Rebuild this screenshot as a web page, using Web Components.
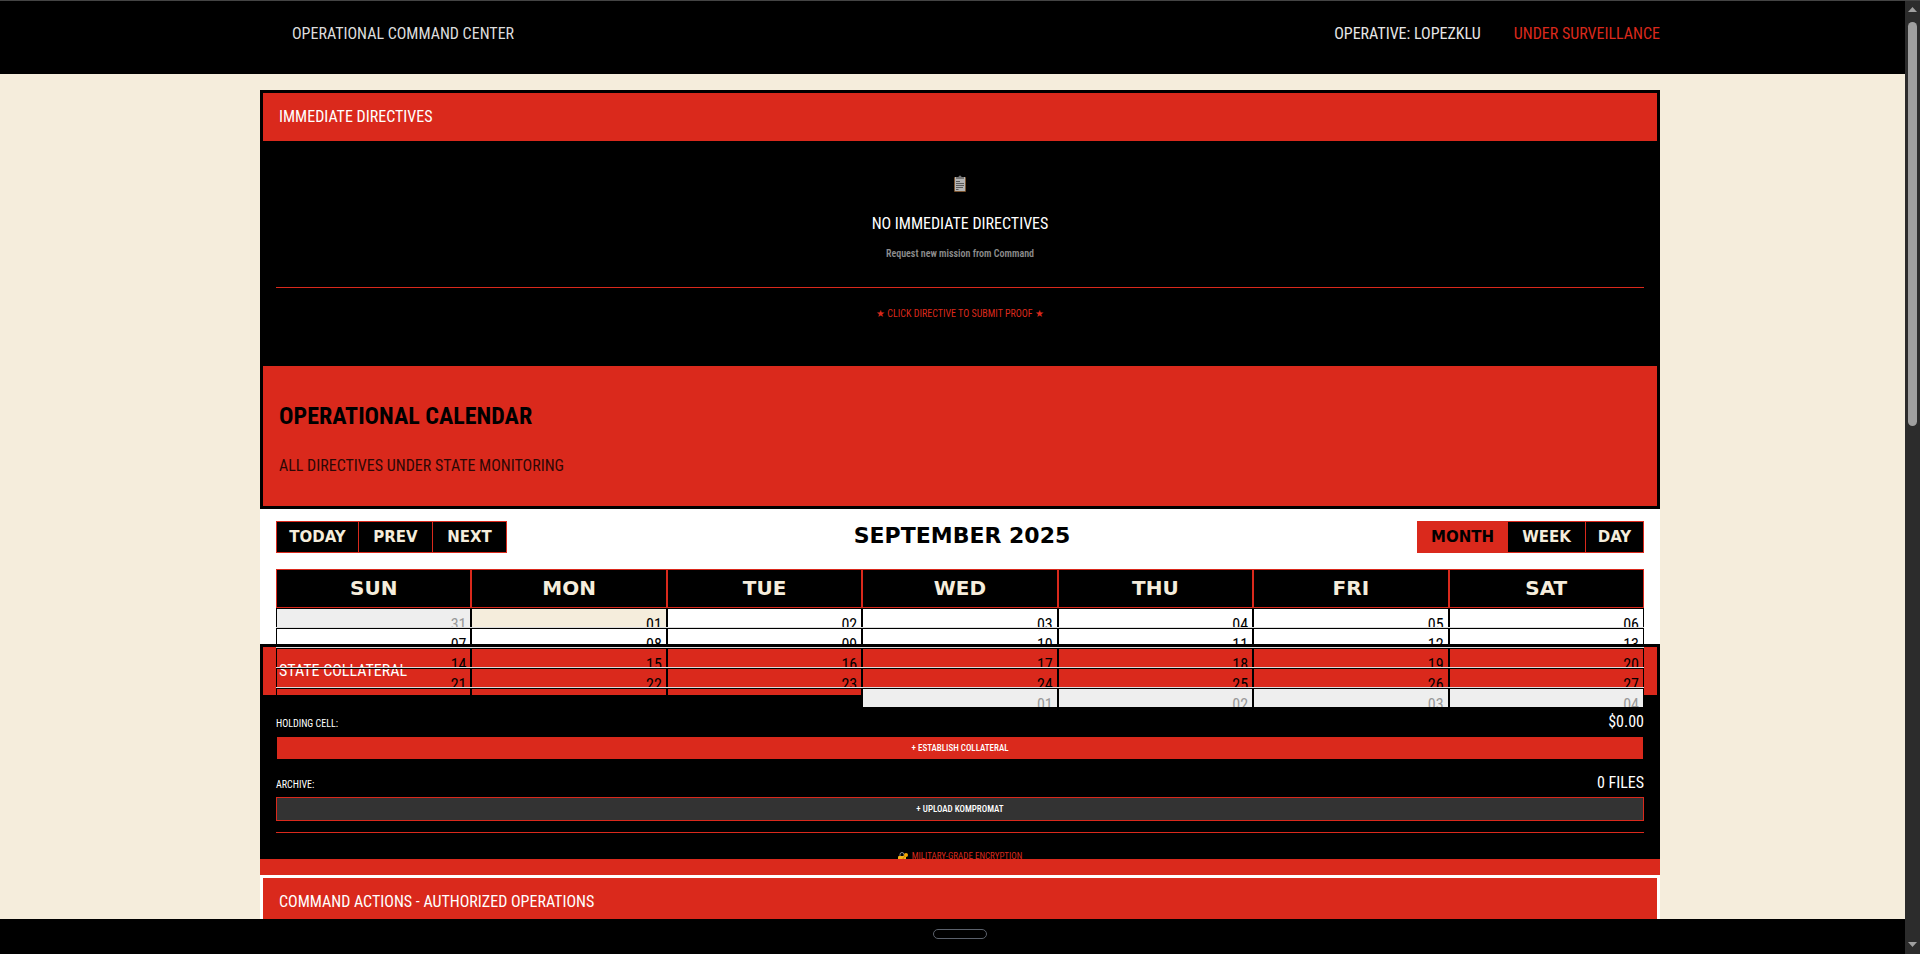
<!DOCTYPE html>
<html lang="en">
<head>
<meta charset="utf-8">
<title>Operational Command Center</title>
<style>
  :root {
    --red: #da291c;
    --cream: #f5eddc;
    --page-width: 1400px;
    --display: "DejaVu Sans", sans-serif;
  }
  html, body { height: 100%; }
  body {
    margin: 0;
    background: var(--cream);
    font: 16px/24px "Roboto Condensed", Roboto, sans-serif;
    color: #fff;
  }
</style>
</head>
<body>
<command-app></command-app>

<script>
const define = (name, html, setup) => {
  const template = document.createElement('template');
  template.innerHTML = html;
  customElements.define(name, class extends HTMLElement {
    constructor() {
      super();
      this.attachShadow({ mode: 'open' }).append(template.content.cloneNode(true));
    }
    connectedCallback() { if (setup) setup(this, this.shadowRoot); }
  });
};

define('command-header', `
  <style>
    :host { display: block; background: #000; border-top: 1px solid #444; }
    nav { display: flex; gap: 33px; max-width: var(--page-width); margin: 0 auto; padding: 21px 0 28px 32px; box-sizing: border-box; }
    .brand { flex: 1; color: #ddd; }
    .user { color: #e6e6e6; }
    .status { color: var(--red); }
  </style>
  <nav>
    <span class="brand">OPERATIONAL COMMAND CENTER</span>
    <span class="user">OPERATIVE: LOPEZKLU</span>
    <span class="status">UNDER SURVEILLANCE</span>
  </nav>`);

define('command-panel', `
  <style>
    :host { display: block; background: #000; border: 3px solid #000; border-bottom: 0; overflow: hidden; }
    :host([tone="light"]) { border-color: #fff; }
    header { background: var(--red); padding: 12px 16px; }
  </style>
  <header><slot name="title"></slot></header>
  <slot></slot>`);

define('directive-list', `
  <style>
    :host { display: block; padding: 32px 13px 42px; text-align: center; }
    svg { display: block; margin: 0 auto 19px; opacity: .75; }
    p { margin: 0; }
    .hint, .note { font-size: 10px; line-height: 15px; }
    .hint { margin: 10px 0 26px; color: #8c8c8c; font-weight: 600; }
    .note { padding-top: 18px; border-top: 1px solid var(--red); color: var(--red); }
  </style>
  <svg width="16" height="20" viewBox="0 0 16 20" aria-hidden="true">
    <rect x="2" y="4" width="12" height="15" rx="1" fill="#a4703f"/>
    <rect x="3" y="4" width="10" height="14" fill="#f0f0f0"/>
    <path d="M4 6V4h2.500a1.500 1.500 0 0 1 3 0H12v2z" fill="#9a9a9a"/>
    <path d="M4 8.500h4M4 10.500h8M4 12.500h8M4 14.500h7M4 16.500h2.500" stroke="#777" fill="none"/>
  </svg>
  <p>NO IMMEDIATE DIRECTIVES</p>
  <p class="hint">Request new mission from Command</p>
  <p class="note">★ CLICK DIRECTIVE TO SUBMIT PROOF ★</p>`);

define('calendar-banner', `
  <style>
    :host { display: block; background: var(--red); border: 3px solid #000; padding: 34px 16px 28px; color: #000; }
    h2 { margin: 0 0 22px; font-size: 24px; line-height: 32px; }
    p { margin: 0; opacity: .8; }
  </style>
  <h2>OPERATIONAL CALENDAR</h2>
  <p>ALL DIRECTIVES UNDER STATE MONITORING</p>`);

define('button-group', `
  <style>
    :host { display: flex; border: 1px solid var(--red); background: #000; box-sizing: border-box; height: 32px; }
    ::slotted(button) {
      border: 0; border-left: 1px solid var(--red); padding: 0;
      background: #000; color: var(--cream);
      font: bold 15px/20px var(--display); cursor: pointer;
    }
    ::slotted(button:first-child) { border-left: 0; }
    ::slotted(button[aria-pressed="true"]) { background: var(--red); color: #000; }
  </style>
  <slot></slot>`);

define('month-calendar', `
  <style>
    :host { display: block; position: relative; z-index: 1; background: #fff; padding: 12px 16px 0; color: #000; }
    .toolbar { display: flex; align-items: center; margin-bottom: 16px; }
    .label { flex: 1; text-align: center; padding-bottom: 2px; font: bold 22px/24px var(--display); }
    .month-view { width: 89px; } .week-view { width: 78px; } .day-view { width: 58px; }
    .today-step { width: 81px; } .step { width: 74px; }
    /* the month grid keeps spilling below its collapsed box */
    .month { height: 75px; overflow: visible; }
    table { width: 100%; table-layout: fixed; border-collapse: separate; border-spacing: 0; }
    th { box-sizing: border-box; height: 39px; padding: 0 0 2px; border: 1px solid var(--red); background: #000; color: var(--cream); font: bold 20px/24px var(--display); }
    td { padding: 0; border-top: 1px solid #ddd; }
    tbody tr:first-child td { border-top: 0; }
    td div { box-sizing: border-box; height: 19px; overflow: hidden; border: 1px solid #000; border-bottom: 0; padding: 4px 4px 0 0; text-align: right; }
    td.off div { background: #eee; color: #999; }
    td.today div { background: var(--cream); }
  </style>
  <div class="toolbar">
    <button-group><button class="today-step">TODAY</button><button class="step">PREV</button><button class="step">NEXT</button></button-group>
    <span class="label">SEPTEMBER 2025</span>
    <button-group><button class="month-view" aria-pressed="true">MONTH</button><button class="week-view">WEEK</button><button class="day-view">DAY</button></button-group>
  </div>
  <div class="month">
    <table><thead><tr></tr></thead><tbody></tbody></table>
  </div>`, (host, root) => {
  const head = root.querySelector('thead tr');
  const body = root.querySelector('tbody');
  if (head.children.length) return;
  for (const day of ['SUN', 'MON', 'TUE', 'WED', 'THU', 'FRI', 'SAT']) {
    const th = document.createElement('th');
    th.scope = 'col';
    th.textContent = day;
    head.append(th);
  }
  for (let week = 0; week < 5; week++) {
    const row = body.insertRow();
    for (let d = 0; d < 7; d++) {
      const date = new Date(2025, 7, 31 + week * 7 + d);
      const cell = row.insertCell();
      const box = document.createElement('div');
      box.textContent = String(date.getDate()).padStart(2, '0');
      if (date.getMonth() !== 8) cell.className = 'off';
      else if (date.getDate() === 1) cell.className = 'today';
      cell.append(box);
    }
  }
});

define('collateral-ledger', `
  <style>
    :host { display: block; height: 164px; box-sizing: border-box; padding: 15px 13px 0; }
    .row { display: flex; justify-content: space-between; align-items: baseline; margin-bottom: 2px; }
    .row span { font-size: 10px; line-height: 15px; }
    button, .note { font-size: 9px; line-height: 15px; }
    button { display: block; box-sizing: border-box; width: 100%; height: 24px; padding: 0; margin: 0 0 11px; border: 1px solid #000; background: var(--red); color: #fff; font-family: inherit; font-weight: 500; cursor: pointer; }
    button.dark { background: #333; border-color: var(--red); margin-bottom: 11px; }
    .note { display: flex; justify-content: center; gap: 4px; margin: 0; padding-top: 16px; border-top: 1px solid var(--red); color: var(--red); }
  </style>
  <div class="row"><span>HOLDING CELL:</span><output>$0.00</output></div>
  <button>+ ESTABLISH COLLATERAL</button>
  <div class="row"><span>ARCHIVE:</span><output>0 FILES</output></div>
  <button class="dark">+ UPLOAD KOMPROMAT</button>
  <p class="note">
    <svg width="10" height="15" viewBox="0 0 10 15" aria-hidden="true">
      <path d="M2 8V5.500a2 2 0 0 1 4 0V8" fill="none" stroke="#8d9299"/>
      <rect x="0" y="7" width="8" height="6" rx="1" fill="#f5b21a"/>
      <circle cx="8" cy="6" r="2" fill="#f5a800"/>
      <path d="M7 7l-3 4" stroke="#c98500"/>
    </svg>
    <span>MILITARY-GRADE ENCRYPTION</span>
  </p>`);

define('command-footer', `
  <style>
    :host { display: flex; justify-content: center; background: #000; padding: 10px 0 15px; }
    button { box-sizing: border-box; width: 54px; height: 10px; padding: 0; border: 1px solid #5b616b; border-radius: 5px; background: transparent; }
  </style>
  <button aria-label="Expand"></button>`);

define('scroll-rail', `
  <style>
    :host { position: fixed; z-index: 5; top: 1px; right: 0; bottom: 0; width: 15px; display: flex; flex-direction: column; align-items: center; box-sizing: border-box; padding: 6px 0 7px; background: #2c2c2c; }
    svg { display: block; fill: #9f9f9f; }
    .thumb { width: 9px; flex: 0 0 43%; margin-top: 10px; border-radius: 5px; background: #9f9f9f; }
    .space { flex: 1; }
  </style>
  <svg width="9" height="5" viewBox="0 0 9 5"><path d="M4.500 0 9 5H0z"/></svg>
  <div class="thumb"></div>
  <div class="space"></div>
  <svg width="9" height="5" viewBox="0 0 9 5"><path d="M0 0h9L4.500 5z"/></svg>`);

define('command-app', `
  <style>
    :host { display: flex; flex-direction: column; height: 100vh; overflow: hidden; }
    main { flex: 1; min-height: 0; overflow: hidden; padding-top: 16px; }
    .column { max-width: var(--page-width); margin: 0 auto; }
    .band { height: 16px; background: var(--red); }
    .actions { height: 120px; background: var(--red); }
  </style>
  <command-header></command-header>
  <main>
    <div class="column">
      <command-panel>
        <span slot="title">IMMEDIATE DIRECTIVES</span>
        <directive-list></directive-list>
      </command-panel>
      <calendar-banner></calendar-banner>
      <month-calendar></month-calendar>
      <command-panel>
        <span slot="title">STATE COLLATERAL</span>
        <collateral-ledger></collateral-ledger>
      </command-panel>
      <div class="band"></div>
      <command-panel tone="light">
        <span slot="title">COMMAND ACTIONS - AUTHORIZED OPERATIONS</span>
        <div class="actions"></div>
      </command-panel>
    </div>
  </main>
  <command-footer></command-footer>
  <scroll-rail></scroll-rail>`);
</script>
</body>
</html>
